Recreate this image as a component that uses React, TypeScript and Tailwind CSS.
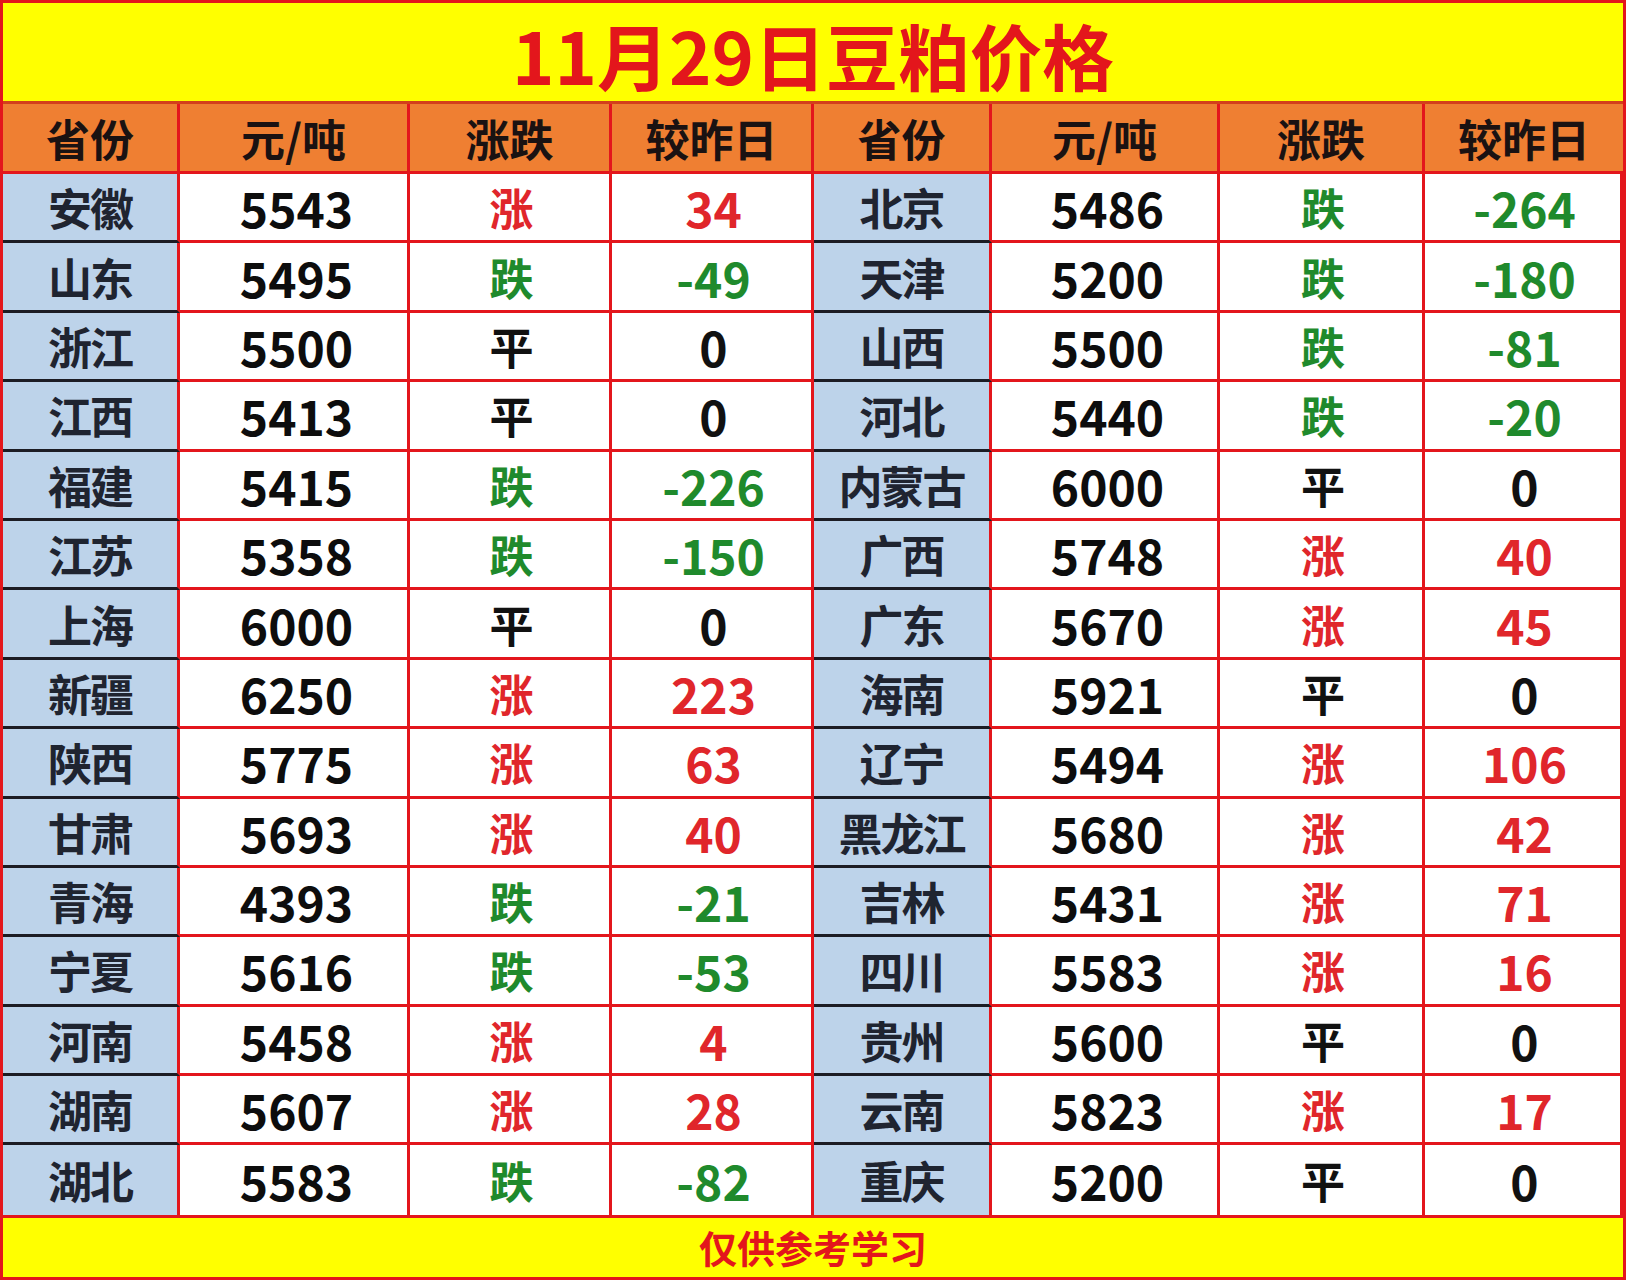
import React from 'react';

type Row = [string, string, string, string];

const left: Row[] = [
  ['安徽', '5543', '涨', '34'],
  ['山东', '5495', '跌', '-49'],
  ['浙江', '5500', '平', '0'],
  ['江西', '5413', '平', '0'],
  ['福建', '5415', '跌', '-226'],
  ['江苏', '5358', '跌', '-150'],
  ['上海', '6000', '平', '0'],
  ['新疆', '6250', '涨', '223'],
  ['陕西', '5775', '涨', '63'],
  ['甘肃', '5693', '涨', '40'],
  ['青海', '4393', '跌', '-21'],
  ['宁夏', '5616', '跌', '-53'],
  ['河南', '5458', '涨', '4'],
  ['湖南', '5607', '涨', '28'],
  ['湖北', '5583', '跌', '-82'],
];

const right: Row[] = [
  ['北京', '5486', '跌', '-264'],
  ['天津', '5200', '跌', '-180'],
  ['山西', '5500', '跌', '-81'],
  ['河北', '5440', '跌', '-20'],
  ['内蒙古', '6000', '平', '0'],
  ['广西', '5748', '涨', '40'],
  ['广东', '5670', '涨', '45'],
  ['海南', '5921', '平', '0'],
  ['辽宁', '5494', '涨', '106'],
  ['黑龙江', '5680', '涨', '42'],
  ['吉林', '5431', '涨', '71'],
  ['四川', '5583', '涨', '16'],
  ['贵州', '5600', '平', '0'],
  ['云南', '5823', '涨', '17'],
  ['重庆', '5200', '平', '0'],
];

const headers = ['省份', '元/吨', '涨跌', '较昨日', '省份', '元/吨', '涨跌', '较昨日'];

function tone(trend: string) {
  if (trend === '涨') return 'text-[#e0262b]';
  if (trend === '跌') return 'text-[#1f8a2c]';
  return 'text-[#111111]';
}

function Cells({ row, last }: { row: Row; last: boolean }) {
  const [name, price, trend, diff] = row;
  const bottom = last ? '' : 'border-b-[3px]';
  const cell = `flex items-center justify-center border-r-[3px] border-[#e3161c] ${bottom} bg-white`;
  return (
    <>
      <div
        className={`flex items-center justify-center border-r-[3px] border-r-[#e3161c] ${last ? '' : 'border-b-[3px] border-b-[#1c1c24]'} bg-[#bdd3ea] text-[#1f2430] text-[44px] tracking-[-2px]`}
      >
        {name}
      </div>
      <div className={`${cell} text-[#0d0d0d] text-[48px] pl-[6px]`}>{price}</div>
      <div className={`${cell} ${tone(trend)} text-[44px] pl-[4px]`}>{trend}</div>
      <div className={`${cell} ${tone(trend)} text-[48px] pl-[4px]`}>{diff}</div>
    </>
  );
}

export default function App() {
  return (
    <div className="w-[1626px] h-[1280px] bg-[#e3161c] p-[3px] font-bold leading-none [font-family:'Noto_Sans_CJK_SC','Noto_Sans',sans-serif]">
      <div className="grid h-full grid-cols-[177px_230px_202px_202px_178px_228px_205px_198px] grid-rows-[101px_70px_repeat(15,69.4px)_1fr]">
        <div className="col-span-8 flex items-center justify-center bg-[#ffff00] border-b-[3px] border-[#d2401c] text-[#e3161c] text-[72px] pt-[4px]">
          11月29日豆粕价格
        </div>
        {headers.map((h, i) => (
          <div
            key={i}
            className={`flex items-center justify-center bg-[#ef7f32] border-b-[3px] ${i < 7 ? 'border-r-[3px]' : ''} border-[#e3161c] text-[#1a1212] text-[44px]`}
          >
            {h}
          </div>
        ))}
        {left.map((row, i) => (
          <React.Fragment key={i}>
            <Cells row={row} last={i === left.length - 1} />
            <Cells row={right[i]} last={i === right.length - 1} />
          </React.Fragment>
        ))}
        <div className="col-span-8 flex items-center justify-center bg-[#ffff00] border-t-[3px] border-[#e3161c] text-[#e3161c] text-[38px]">
          仅供参考学习
        </div>
      </div>
    </div>
  );
}
